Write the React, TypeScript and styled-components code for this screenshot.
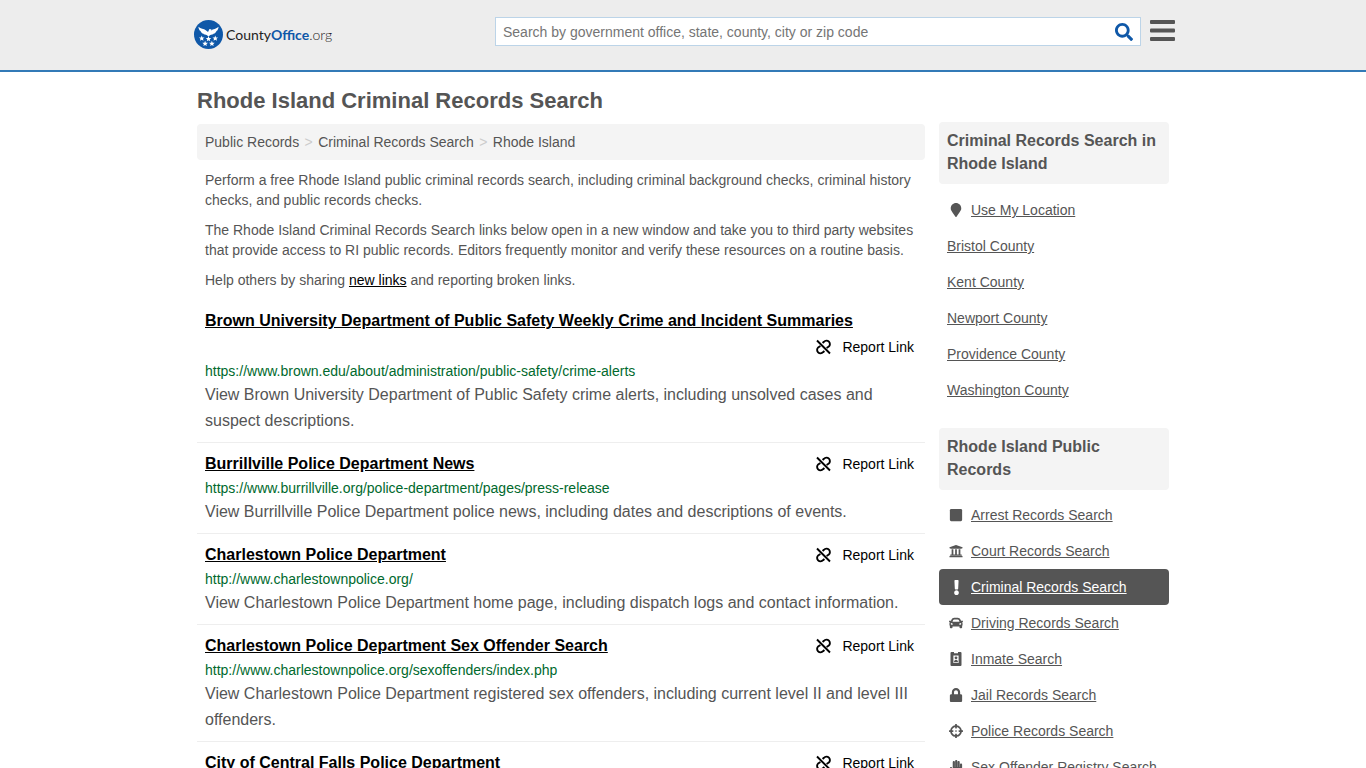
import React from 'react';
import styled, { createGlobalStyle, css } from 'styled-components';
import {
  FaCar, FaCrosshairs, FaExclamation, FaHandPaper, FaLock,
  FaMapMarker, FaSearch, FaSquare, FaUniversity,
} from 'react-icons/fa';

const Global = createGlobalStyle`
  *, *::before, *::after { box-sizing: border-box; }
  body {
    margin: 0;
    background: #fff;
    color: #555;
    font: 14px/20px Arial, "Liberation Sans", sans-serif;
  }
  a { color: inherit; }
`;

const Header = styled.header`
  height: 72px;
  background: #ededed;
  border-bottom: 2px solid #337ab7;
`;

const container = css`
  max-width: 972px;
  margin: 0 auto;
`;

const HeaderInner = styled.div`
  ${container}
  max-width: 984px;
  display: flex;
  justify-content: space-between;
  align-items: flex-start;
  padding: 17px 0 0 3px;
`;

const Logo = styled.a`
  display: flex;
  align-items: center;
  gap: 3px;
  padding-top: 3px;
  text-decoration: none;
`;

const Tools = styled.div`
  display: flex;
  align-items: flex-start;
  gap: 9px;
`;

const SearchBox = styled.form`
  display: flex;
  width: 646px;
  height: 29px;
  background: #fff;
  border: 1px solid #bcd4e8;
`;

const SearchInput = styled.input`
  flex: 1;
  min-width: 0;
  padding: 0 7px;
  border: 0;
  outline: 0;
  background: transparent;
  font: inherit;
  &::placeholder { color: #757575; opacity: 1; }
`;

const IconButton = styled.button<{ $color: string }>`
  display: flex;
  align-items: center;
  padding: 0;
  border: 0;
  background: transparent;
  color: ${(p) => p.$color};
`;

const SearchButton = styled(IconButton)`
  padding: 0 7px;
`;

const Page = styled.div`
  ${container}
  padding-top: 15px;
`;

const Columns = styled.div`
  display: flex;
  align-items: flex-start;
  gap: 14px;
`;

const Main = styled.main`
  flex: 1;
  min-width: 0;
`;

const Title = styled.h1`
  margin: 0 0 9px;
  font-size: 22px;
  line-height: 28px;
`;

const Crumbs = styled.nav`
  display: flex;
  gap: 5px;
  padding: 8px;
  background: #f4f4f4;
  border-radius: 4px;
  a { text-decoration: none; }
`;

const Separator = styled.span`
  width: 9px;
  color: #ccc;
  text-align: center;
`;

const Intro = styled.div`
  padding: 10px 8px;
  p { margin: 0 0 10px; }
  p:last-child { margin: 0; }
`;

const InlineLink = styled.a`
  color: #000;
`;

const Records = styled.ul`
  margin: 0;
  padding: 0;
  list-style: none;
`;

const Record = styled.li`
  padding: 8px;
  border-bottom: 1px solid #eee;
`;

const RecordHead = styled.div`
  display: flex;
  flex-wrap: wrap;
  justify-content: space-between;
  line-height: 26px;
`;

const RecordTitle = styled.a`
  color: #000;
  font-size: 16px;
  font-weight: bold;
`;

const Report = styled.a`
  display: flex;
  align-items: center;
  gap: 11px;
  margin-left: auto;
  padding-right: 3px;
  color: #000;
  text-decoration: none;
`;

const Url = styled.div`
  color: #00692d;
  line-height: 22px;
`;

const Description = styled.p`
  margin: 0;
  font-size: 16px;
  line-height: 26px;
`;

const Side = styled.aside`
  width: 230px;
  margin-top: -2px;
`;

const SideTitle = styled.h2`
  margin: 0 0 8px;
  padding: 7px 8px 9px;
  background: #f4f4f4;
  border-radius: 4px;
  font-size: 16px;
  line-height: 23px;
`;

const SideList = styled.ul`
  margin: 0 0 20px;
  padding: 0;
  list-style: none;
`;

const SideItem = styled.li<{ $active?: boolean }>`
  display: flex;
  align-items: center;
  gap: 6px;
  padding: 8px;
  border-radius: 4px;
  ${(p) => p.$active && css`
    background: #555;
    color: #fff;
  `}
`;

const RecordTypes = styled(SideList)`
  margin-top: -1px;
`;

const IconSlot = styled.span`
  display: flex;
  flex: none;
  justify-content: center;
  width: 18px;
`;

const LogoMark = () => (
  <svg width="29" height="29" viewBox="0 0 30 30" aria-hidden="true">
    <circle cx="15" cy="15" r="15" fill="#0f58a8" />
    <path fill="#fff" d="M4.500 7c2.500 2.400 5.500 1.800 8 3.800.8.700 1.400 1.200 2 1.500L16 9.300l2.200.5-.9 1.200C20 9.200 23 9.400 25.500 7c-.2 1.700-.8 3-1.600 4l-1 .3.3.7c-.7.900-1.500 1.600-2.400 2.100l-.9 0 0 .6c-1.900.6-2.700.3-3.700 1.300L15 17l-1.200-1c-1-1-1.800-.7-3.700-1.300l0-.6-.9 0C8.300 13.600 7.500 12.900 6.800 12l.3-.7-1-.3C5.300 10 4.700 8.700 4.500 7z" />
    {[[8, 19], [15, 19.500], [22, 19], [11.500, 24.500], [18.500, 24.500]].map(([x, y]) => (
      <path key={`${x}-${y}`} transform={`translate(${x} ${y})`} fill="#fff" d="M0-3L.8-1 2.900-.9 1.300.5 1.800 2.500 0 1.400-1.800 2.500-1.300.5-2.900-.9-.8-1z" />
    ))}
  </svg>
);

const LogoText = styled.span`
  color: #222;
  font-family: Lato, sans-serif;
  font-size: 14px;
  b { color: #0f58a8; }
`;

const LogoSuffix = styled.span`
  font-weight: 300;
`;

const MenuIcon = () => (
  <svg width="25" height="26" viewBox="0 0 25 26" fill="currentColor" aria-hidden="true">
    <rect y="3" width="25" height="4" rx="1" />
    <rect y="11.500" width="25" height="4" rx="1" />
    <rect y="20" width="25" height="4" rx="1" />
  </svg>
);

const BrokenLink = () => (
  <svg width="15" height="16" viewBox="0 0 15 16" fill="none" stroke="currentColor" strokeWidth="1.9" aria-hidden="true">
    <path d="M1 1.500l13 13M6.600 4l1.300-1.200a3.400 3.400 0 0 1 5-.1 3.400 3.400 0 0 1-.1 4.900L10.600 9M8.400 12l-1.300 1.200a3.400 3.400 0 0 1-5 .1 3.400 3.400 0 0 1 .1-4.900L4.400 7" />
  </svg>
);

const Badge = () => (
  <svg width="12" height="14" viewBox="0 0 12 14" aria-hidden="true">
    <path fill="currentColor" fillRule="evenodd" d="M1.500 0H4v1.200h4V0h2.500a1 1 0 0 1 1 1v12a1 1 0 0 1-1 1h-9a1 1 0 0 1-1-1V1a1 1 0 0 1 1-1zM3.400 3.500v7.500h5.200V3.500z" />
    <circle cx="6" cy="5.800" r="1.400" fill="currentColor" />
    <path fill="currentColor" d="M4 10.200c0-1.500.8-2.400 2-2.400s2 .9 2 2.400z" />
  </svg>
);

const records = [
  ['Brown University Department of Public Safety Weekly Crime and Incident Summaries', 'https://www.brown.edu/about/administration/public-safety/crime-alerts', 'View Brown University Department of Public Safety crime alerts, including unsolved cases and suspect descriptions.'],
  ['Burrillville Police Department News', 'https://www.burrillville.org/police-department/pages/press-release', 'View Burrillville Police Department police news, including dates and descriptions of events.'],
  ['Charlestown Police Department', 'http://www.charlestownpolice.org/', 'View Charlestown Police Department home page, including dispatch logs and contact information.'],
  ['Charlestown Police Department Sex Offender Search', 'http://www.charlestownpolice.org/sexoffenders/index.php', 'View Charlestown Police Department registered sex offenders, including current level II and level III offenders.'],
  ['City of Central Falls Police Department', 'http://www.centralfallspolice.com/', 'View City of Central Falls Police Department home page.'],
];

const counties = ['Bristol County', 'Kent County', 'Newport County', 'Providence County', 'Washington County'];

const publicRecords: { label: string; icon: React.ReactNode; active?: boolean }[] = [
  { label: 'Arrest Records Search', icon: <FaSquare size={14} /> },
  { label: 'Court Records Search', icon: <FaUniversity size={14} /> },
  { label: 'Criminal Records Search', icon: <FaExclamation size={15} />, active: true },
  { label: 'Driving Records Search', icon: <FaCar size={14} /> },
  { label: 'Inmate Search', icon: <Badge /> },
  { label: 'Jail Records Search', icon: <FaLock size={14} /> },
  { label: 'Police Records Search', icon: <FaCrosshairs size={14} /> },
  { label: 'Sex Offender Registry Search', icon: <FaHandPaper size={14} /> },
];

export default function App() {
  return (
    <>
      <Global />
      <Header>
        <HeaderInner>
          <Logo href="#">
            <LogoMark />
            <LogoText>County<b>Office</b><LogoSuffix>.org</LogoSuffix></LogoText>
          </Logo>
          <Tools>
            <SearchBox>
              <SearchInput aria-label="Search" placeholder="Search by government office, state, county, city or zip code" />
              <SearchButton type="button" $color="#0f58a8" aria-label="Search"><FaSearch size={18} /></SearchButton>
            </SearchBox>
            <IconButton type="button" $color="#555" aria-label="Menu"><MenuIcon /></IconButton>
          </Tools>
        </HeaderInner>
      </Header>
      <Page>
        <Title>Rhode Island Criminal Records Search</Title>
        <Columns>
          <Main>
            <Crumbs aria-label="Breadcrumb">
              <a href="#">Public Records</a><Separator>&gt;</Separator>
              <a href="#">Criminal Records Search</a><Separator>&gt;</Separator>
              <a href="#">Rhode Island</a>
            </Crumbs>
            <Intro>
              <p>Perform a free Rhode Island public criminal records search, including criminal background checks, criminal history checks, and public records checks.</p>
              <p>The Rhode Island Criminal Records Search links below open in a new window and take you to third party websites that provide access to RI public records. Editors frequently monitor and verify these resources on a routine basis.</p>
              <p>Help others by sharing <InlineLink href="#">new links</InlineLink> and reporting broken links.</p>
            </Intro>
            <Records>
              {records.map(([title, url, text]) => (
                <Record key={title}>
                  <RecordHead>
                    <RecordTitle href="#">{title}</RecordTitle>
                    <Report href="#"><BrokenLink />Report Link</Report>
                  </RecordHead>
                  <Url>{url}</Url>
                  <Description>{text}</Description>
                </Record>
              ))}
            </Records>
          </Main>
          <Side>
            <SideTitle>Criminal Records Search in Rhode Island</SideTitle>
            <SideList>
              <SideItem>
                <IconSlot><FaMapMarker size={14} /></IconSlot>
                <a href="#">Use My Location</a>
              </SideItem>
              {counties.map((name) => (
                <SideItem key={name}><a href="#">{name}</a></SideItem>
              ))}
            </SideList>
            <SideTitle>Rhode Island Public Records</SideTitle>
            <RecordTypes>
              {publicRecords.map(({ label, icon, active }) => (
                <SideItem key={label} $active={active}>
                  <IconSlot>{icon}</IconSlot>
                  <a href="#">{label}</a>
                </SideItem>
              ))}
            </RecordTypes>
          </Side>
        </Columns>
      </Page>
    </>
  );
}
